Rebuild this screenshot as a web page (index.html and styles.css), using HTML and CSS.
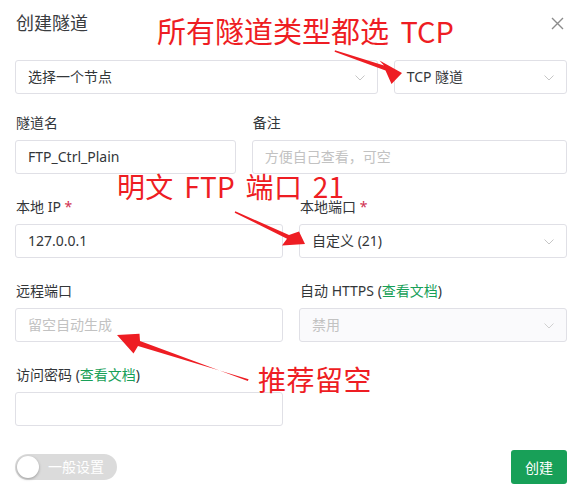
FILE: index.html
```html
<!DOCTYPE html>
<html lang="zh-CN">
<head>
<meta charset="utf-8">
<title>创建隧道</title>
<link rel="stylesheet" href="styles.css">
</head>
<body>
<div class="modal">
  <header class="modal-head">
    <h1 class="title">创建隧道</h1>
    <button class="close" aria-label="关闭">
      <svg width="13" height="13" viewBox="0 0 13 13"><path d="M1 1L12 12M12 1L1 12" stroke="#8c8c8c" stroke-width="1.4" fill="none"/></svg>
    </button>
  </header>

  <div class="grid top-row">
    <div class="span-8">
      <div class="select"><span class="value">选择一个节点</span><svg class="chev" width="10" height="6" viewBox="0 0 10 6"><path d="M0.5 0.5L5 5L9.5 0.5" stroke="#c6c6c6" stroke-width="1" fill="none"/></svg></div>
    </div>
    <div class="span-4">
      <div class="select"><span class="value">TCP 隧道</span><svg class="chev" width="10" height="6" viewBox="0 0 10 6"><path d="M0.5 0.5L5 5L9.5 0.5" stroke="#c6c6c6" stroke-width="1" fill="none"/></svg></div>
    </div>
  </div>

  <div class="grid form">
    <div class="field span-5">
      <label class="label">隧道名</label>
      <div class="input"><span class="value">FTP_Ctrl_Plain</span></div>
    </div>
    <div class="field span-7">
      <label class="label">备注</label>
      <div class="input"><span class="placeholder">方便自己查看，可空</span></div>
    </div>

    <div class="field span-6">
      <label class="label">本地 IP <span class="req">*</span></label>
      <div class="input"><span class="value">127.0.0.1</span></div>
    </div>
    <div class="field span-6">
      <label class="label">本地端口 <span class="req">*</span></label>
      <div class="select"><span class="value">自定义 (21)</span><svg class="chev" width="10" height="6" viewBox="0 0 10 6"><path d="M0.5 0.5L5 5L9.5 0.5" stroke="#c6c6c6" stroke-width="1" fill="none"/></svg></div>
    </div>

    <div class="field span-6">
      <label class="label">远程端口</label>
      <div class="input"><span class="placeholder">留空自动生成</span></div>
    </div>
    <div class="field span-6">
      <label class="label">自动 HTTPS (<a class="link">查看文档</a>)</label>
      <div class="select disabled"><span class="placeholder">禁用</span><svg class="chev" width="10" height="6" viewBox="0 0 10 6"><path d="M0.5 0.5L5 5L9.5 0.5" stroke="#d0d0d0" stroke-width="1" fill="none"/></svg></div>
    </div>

    <div class="field span-6">
      <label class="label">访问密码 (<a class="link">查看文档</a>)</label>
      <div class="input"></div>
    </div>
  </div>

  <footer class="modal-foot">
    <div class="switch"><span class="knob"></span><span class="switch-text">一般设置</span></div>
    <button class="btn-primary">创建</button>
  </footer>

  <div class="note note-1">所有隧道类型都选 TCP</div>
  <div class="note note-2">明文 FTP 端口 21</div>
  <div class="note note-3">推荐留空</div>

  <svg class="arrows" width="581" height="495" viewBox="0 0 581 495">
    <polygon fill="#ee1d23" points="335,50.3 384,65.5 379.5,60.5 402,73 391.5,84 385.5,70.5 334.6,51.7"/>
    <polygon fill="#ee1d23" points="235.3,211.3 289,235 299,231.5 305,244 282,245.5 287,238.8 234.7,212.7"/>
    <polygon fill="#ee1d23" points="248.6,379.3 138,346 133.5,353.5 117,335 139.5,333.8 140,341 247.8,381"/>
  </svg>
</div>
</body>
</html>
```

FILE: styles.css
```css
* { box-sizing: border-box; }

html, body {
  margin: 0;
  padding: 0;
  background: #fff;
}

body {
  font-family: "Noto Sans", "Noto Sans CJK SC", sans-serif;
  font-size: 14px;
  color: #333639;
}

.modal {
  position: relative;
  width: 581px;
  height: 495px;
  padding: 10px 14px 0 15px;
}

.modal-head {
  display: flex;
  justify-content: space-between;
  align-items: center;
  height: 26px;
}

.title {
  margin: 0;
  font-size: 18px;
  font-weight: 400;
  line-height: 26px;
  color: #3a3c3f;
  padding-left: 1px;
}

.close {
  border: 0;
  background: none;
  padding: 0;
  width: 13px;
  height: 13px;
  margin-right: 3px;
  display: flex;
}

.grid {
  display: grid;
  grid-template-columns: repeat(12, 1fr);
  column-gap: 16px;
}

.span-4 { grid-column: span 4; }
.span-5 { grid-column: span 5; }
.span-6 { grid-column: span 6; }
.span-7 { grid-column: span 7; }
.span-8 { grid-column: span 8; }

.top-row { margin-top: 24px; }

.form {
  margin-top: 18px;
  row-gap: 22px;
}

.label {
  display: block;
  line-height: 22px;
  padding: 0 0 6px 1px;
  color: #333639;
  white-space: nowrap;
}

.req { color: #d03050; }

.link {
  color: #18a058;
  text-decoration: none;
}

.input, .select {
  height: 34px;
  border: 1px solid #e0e0e6;
  border-radius: 3px;
  display: flex;
  align-items: center;
  padding: 0 12px;
  background: #fff;
  line-height: 20px;
}

.select { justify-content: space-between; }

.select.disabled { background: #fafafc; }

.value { color: #333639; }

.placeholder { color: #c2c2c2; }

.chev { flex: none; margin-top: 1px; }

.modal-foot {
  margin-top: 24px;
  display: flex;
  justify-content: space-between;
  align-items: center;
  height: 34px;
}

.switch {
  width: 102px;
  height: 26px;
  border-radius: 13px;
  background: #dbdbdb;
  display: flex;
  align-items: center;
  padding-left: 2px;
}

.knob {
  width: 22px;
  height: 22px;
  border-radius: 50%;
  background: #fff;
  box-shadow: 0 1px 3px rgba(0, 0, 0, 0.3);
  flex: none;
}

.switch-text {
  margin-left: 9px;
  color: #fff;
  line-height: 20px;
}

.btn-primary {
  width: 56px;
  height: 34px;
  border: 0;
  border-radius: 3px;
  background: #18a058;
  color: #fff;
  font-family: inherit;
  font-size: 14px;
  padding: 0;
}

.note {
  position: absolute;
  font-family: "Noto Sans CJK SC", sans-serif;
  font-size: 28px;
  line-height: 28px;
  color: #ee1d23;
  white-space: nowrap;
}

.note-1 { left: 157px; top: 16px; font-size: 29px; word-spacing: 5px; }
.note-2 { left: 117px; top: 172px; word-spacing: 4px; letter-spacing: 0.3px; }
.note-3 { left: 258px; top: 365px; letter-spacing: 0.5px; }

.arrows {
  position: absolute;
  left: 0;
  top: 0;
  pointer-events: none;
}
```
